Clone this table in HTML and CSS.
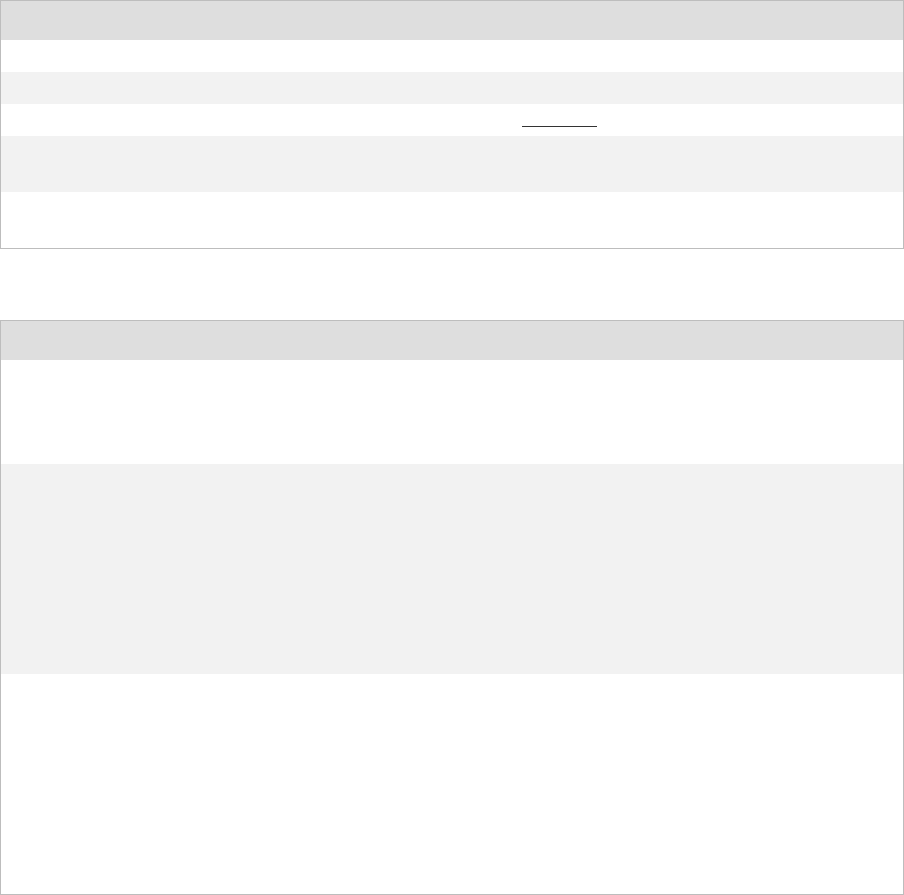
FILE: index.html
```html
<!DOCTYPE html>
<html>
<head>
<meta charset="utf-8">
<link rel="stylesheet" href="styles.css">
</head>
<body>
<div class="table t1">
  <div class="head"></div>
  <div class="row h32"></div>
  <div class="row h32 alt"></div>
  <div class="row h32 linkrow"><a class="link" href="#"></a></div>
  <div class="row h56 alt"></div>
  <div class="row h56"></div>
</div>
<div class="table t2">
  <div class="head"></div>
  <div class="row h104"></div>
  <div class="row h210 alt"></div>
  <div class="row h220"></div>
</div>
</body>
</html>
```
FILE: styles.css
```css
html, body {
  margin: 0;
  padding: 0;
  background: #fff;
  font-family: "Liberation Sans", Arial, sans-serif;
}
.table {
  border: 1px solid #bdbdbd;
  display: flex;
  flex-direction: column;
}
.t2 {
  margin-top: 71px;
}
.head {
  height: 39px;
  background: #dedede;
}
.row {
  background: #fff;
}
.row.alt {
  background: #f2f2f2;
}
.h32 { height: 32px; }
.h56 { height: 56px; }
.h104 { height: 104px; }
.h210 { height: 210px; }
.h220 { height: 220px; }
.linkrow {
  display: flex;
  padding-left: 521px;
  box-sizing: border-box;
}
.link {
  display: block;
  width: 75px;
  height: 22px;
  border-bottom: 1px solid #333;
}
```
